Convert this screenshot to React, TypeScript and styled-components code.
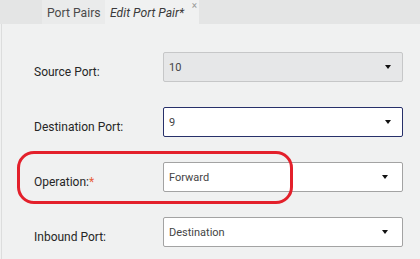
import styled, { createGlobalStyle } from "styled-components"

const GlobalStyle = createGlobalStyle`
  html, body {
    margin: 0;
    padding: 0;
    background: #f0f1f1;
  }
  body {
    font-family: Roboto, "Liberation Sans", sans-serif;
    width: 420px;
    height: 259px;
    overflow: hidden;
  }
`

const TabBar = styled.div`
  display: flex;
  height: 24px;
  padding-left: 42px;
  background: #e4e5e5;
`

const Tab = styled.div<{ $active?: boolean }>`
  position: relative;
  display: flex;
  align-items: center;
  padding: 1px 0 0 5px;
  width: ${p => (p.$active ? "94px" : "63px")};
  box-sizing: border-box;
  font-size: 12.2px;
  font-style: ${p => (p.$active ? "italic" : "normal")};
  color: ${p => (p.$active ? "#3a3a3a" : "#4a4a4a")};
  background: ${p => (p.$active ? "#f0f1f1" : "#eaebeb")};
  white-space: nowrap;
`

const Close = styled.span`
  position: absolute;
  top: 0;
  right: 2px;
  font-size: 10px;
  font-style: normal;
  color: #9a9a9a;
`

const Panel = styled.div`
  position: relative;
  height: 235px;
  margin-left: 1px;
  border-left: 1px solid #dcdddd;
  padding: 28px 0 0 32px;
  box-sizing: border-box;
  display: flex;
  flex-direction: column;
  gap: 25px;
`

const Row = styled.div`
  display: grid;
  grid-template-columns: 129px 240px;
  align-items: center;
`

const Label = styled.div`
  font-size: 12px;
  color: #262626;
  padding-top: 9px;
`

const Required = styled.span`
  color: #e8603c;
`

const Select = styled.div<{ $variant?: "disabled" | "focus" | "plain" }>`
  height: 30px;
  box-sizing: border-box;
  display: flex;
  align-items: center;
  justify-content: space-between;
  padding: 0 ${p => (p.$variant === "plain" ? "14px" : "11px")} 0 5px;
  border-radius: 2px;
  font-size: 11px;
  color: #444;
  background: ${p => (p.$variant === "disabled" ? "#e6e7e8" : "#fff")};
  border: 1px solid
    ${p =>
      p.$variant === "disabled"
        ? "#c6c7c8"
        : p.$variant === "focus"
        ? "#27306a"
        : "#a3a3a3"};
`

const Arrow = styled.span`
  width: 0;
  height: 0;
  border-left: 3.5px solid transparent;
  border-right: 3.5px solid transparent;
  border-top: 4px solid #111;
`

const Highlight = styled.div`
  position: absolute;
  left: 15px;
  top: 127px;
  width: 276px;
  height: 53px;
  box-sizing: border-box;
  border: 3px solid #e3202b;
  border-radius: 17px;
  pointer-events: none;
`

const fields = [
  { label: "Source Port:", value: "10", variant: "disabled" as const },
  { label: "Destination Port:", value: "9", variant: "focus" as const },
  { label: "Operation:", value: "Forward", variant: "plain" as const, required: true },
  { label: "Inbound Port:", value: "Destination", variant: "plain" as const },
]

export default function App() {
  return (
    <>
      <GlobalStyle />
      <TabBar>
        <Tab>Port Pairs</Tab>
        <Tab $active>
          Edit Port Pair*
          <Close>×</Close>
        </Tab>
      </TabBar>
      <Panel>
        {fields.map(f => (
          <Row key={f.label}>
            <Label>
              {f.label}
              {f.required && <Required>*</Required>}
            </Label>
            <Select $variant={f.variant}>
              {f.value}
              <Arrow />
            </Select>
          </Row>
        ))}
        <Highlight />
      </Panel>
    </>
  )
}
